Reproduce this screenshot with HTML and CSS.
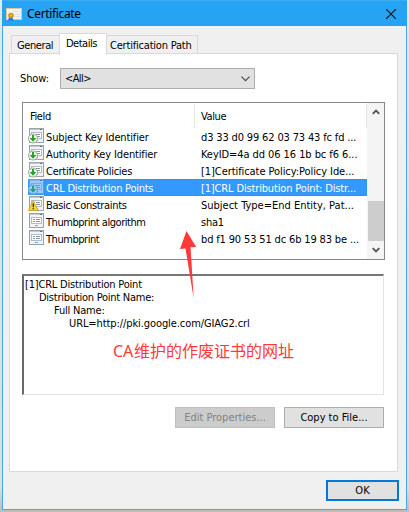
FILE: index.html
```html
<!DOCTYPE html>
<html lang="en">
<head>
<meta charset="utf-8">
<title>Certificate</title>
<link rel="stylesheet" href="styles.css">
</head>
<body>
<svg class="defs" aria-hidden="true">
  <symbol id="doc" viewBox="0 0 16 16">
    <rect x="1.5" y=".5" width="14" height="14" fill="#f1f3f5" stroke="#9aa2a9"/>
    <path d="M2 1.5h13" stroke="#c3cbd2"/>
    <path d="M12 1.5h2" stroke="#627583"/>
    <rect x="3.5" y="4.5" width="10" height="6" fill="#fff" stroke="#b4bdc4"/>
    <path d="M5 6.5h2M8 6.5h4M5 8.5h2M8 8.5h4" stroke="#89959f"/>
    <path d="M7 12.5h3" stroke="#36c5ee"/>
  </symbol>
  <symbol id="ext" viewBox="0 0 16 16">
    <use href="#doc"/>
    <circle cx="5" cy="10.5" r="4.5" fill="#f6faf5" stroke="#8c9b8d" stroke-width=".9"/>
    <path d="M4 7h2v3h2.5L5 13.8 1.5 10H4z" fill="#26a423"/>
  </symbol>
  <symbol id="warn" viewBox="0 0 16 16">
    <use href="#doc"/>
    <path d="M5.2 4.5 10.2 14.5H.4z" fill="#ffd82d" stroke="#c69b16" stroke-width=".8" stroke-linejoin="round"/>
    <path d="M5.3 7.5v3.7M5.3 12v1.3" stroke="#33301e" stroke-width="1.3"/>
  </symbol>
</svg>
<div class="window">
  <header class="titlebar">
    <svg class="cert" viewBox="0 0 16 14"><rect x=".5" y=".5" width="15" height="11" fill="#f4f2ed" stroke="#d9c8a5"/><path d="M7 3.5h6M9 6.5h5M9 8.5h5" stroke="#dcdedf"/><path d="m3 9-1 4 2-1 1 1V9zm3 0 2 4-2-1-1 1V9z" fill="#2873d0"/><circle cx="5" cy="7.5" r="2.8" fill="#d79313"/><circle cx="5" cy="7.2" r="1.2" fill="#f0b437"/></svg>
    <span class="title">Certificate</span>
    <svg class="close" viewBox="0 0 10 10"><path d="m0 0 10 10M10 0 0 10" stroke="#111" stroke-width="1.1"/></svg>
  </header>
  <nav class="tabs">
    <div class="tab general">General</div>
    <div class="tab active">Details</div>
    <div class="tab path">Certification Path</div>
  </nav>
  <main class="panel">
    <div class="show">
      <label>Show:</label>
      <div class="select"><span>&lt;All&gt;</span><svg viewBox="0 0 9 6"><path d="m.5.7 4 4 4-4" fill="none" stroke="#444" stroke-width="1.1"/></svg></div>
    </div>
    <section class="list">
      <div class="table">
        <div class="head"><span class="field">Field</span><span class="value">Value</span></div>
        <div class="row"><svg><use href="#ext"/></svg><span class="name n1">Subject Key Identifier</span><span class="data d1">d3 33 d0 99 62 03 73 43 fc fd ...</span></div>
        <div class="row"><svg><use href="#ext"/></svg><span class="name n2">Authority Key Identifier</span><span class="data d2">KeyID=4a dd 06 16 1b bc f6 6...</span></div>
        <div class="row"><svg><use href="#ext"/></svg><span class="name n3">Certificate Policies</span><span class="data d3">[1]Certificate Policy:Policy Ide...</span></div>
        <div class="row selected"><svg><use href="#ext"/></svg><span class="name n4">CRL Distribution Points</span><span class="data d4">[1]CRL Distribution Point: Distr...</span></div>
        <div class="row"><svg><use href="#warn"/></svg><span class="name n5">Basic Constraints</span><span class="data d5">Subject Type=End Entity, Pat...</span></div>
        <div class="row"><svg><use href="#doc"/></svg><span class="name n6">Thumbprint algorithm</span><span class="data d6">sha1</span></div>
        <div class="row"><svg><use href="#doc"/></svg><span class="name n7">Thumbprint</span><span class="data d7">bd f1 90 53 51 dc 6b 19 83 be ...</span></div>
      </div>
      <div class="scrollbar">
        <svg viewBox="0 0 8 6"><path d="m.7 4.8 3.3-3.3 3.3 3.3" fill="none" stroke="#555" stroke-width="1.9"/></svg>
        <div class="thumb"></div>
        <svg viewBox="0 0 8 6"><path d="m.7 1.2 3.3 3.3 3.3-3.3" fill="none" stroke="#555" stroke-width="1.9"/></svg>
      </div>
    </section>
    <section class="details">
      <p class="l1">[1]CRL Distribution Point</p>
      <p class="l2">Distribution Point Name:</p>
      <p class="l3">Full Name:</p>
      <p class="l4">URL=http://pki.google.com/GIAG2.crl</p>
      <p class="note"><span>CA</span>维护的作废证书的网址</p>
    </section>
    <div class="actions"><button class="edit" disabled>Edit Properties...</button><button class="copy">Copy to File...</button></div>
  </main>
  <footer><button class="ok">OK</button></footer>
</div>
<svg class="arrow" viewBox="0 0 18 68"><path d="m6.5 0 9.7 16-5.7.3L13.7 67.5 5.5 17.5 0 18z" fill="#ff3838"/></svg>
</body>
</html>
```
FILE: styles.css
```css
* { box-sizing: border-box; }
body {
  margin: 0; height: 512px; padding: 0 2px; overflow: hidden;
  background: linear-gradient(#e4e8e8, #dedede 95%, #bcbcbc);
  font: 11px/13px "DejaVu Sans Condensed", "DejaVu Sans", sans-serif;
  font-stretch: condensed;
  color: #000;
}
.defs { position: absolute; width: 0; height: 0; }
svg { display: block; flex: none; }
.window { width: 405px; height: 510px; background: #f0f0f0; border: 1px solid #3ea9ee; border-top: 0; white-space: nowrap; }
.titlebar { height: 26px; margin: 0 -1px; padding: 0 11px 0 4px; display: flex; align-items: center; background: #27a3f3; border-top: 1px solid #40aaf0; }
.cert { width: 16px; height: 14px; margin-top: 2px; }
.title { font: 12px/16px "Noto Sans", sans-serif; margin-left: 5px; letter-spacing: -.35px; }
.close { width: 10px; height: 10px; margin-left: auto; }
.tabs { height: 28px; padding: 7px 0 0 8px; display: flex; align-items: flex-end; }
.tab { height: 19px; border: 1px solid #d9d9d9; border-bottom: 0; padding-top: 3px; }
.general { width: 48px; padding-left: 5px; border-right: 0; letter-spacing: -.4px; }
.active { width: 48px; height: 22px; margin-bottom: -1px; padding: 3px 0 0 6px; background: #fff; position: relative; letter-spacing: -.5px; }
.path { width: 91px; padding-left: 3px; border-left: 0; letter-spacing: -.2px; }
.panel { width: 389px; height: 419px; margin-left: 6px; margin-top: -1px; padding: 14px 12px 0; background: #fff; border: 1px solid #d9d9d9; }
.show { display: flex; align-items: center; height: 21px; }
.show label { width: 38px; margin-left: -2px; letter-spacing: -.1px; }
.select { width: 195px; height: 21px; margin-left: 2px; padding: 0 4px; display: flex; align-items: center; justify-content: space-between; background: #e1e1e1; border: 1px solid #adadad; letter-spacing: -.6px; }
.select svg { width: 9px; height: 6px; }
.list { width: 363px; height: 158px; margin-top: 13px; border: 1px solid #828790; display: flex; }
.table { width: 344px; padding: 1px 0 0; }
.head { height: 24px; display: flex; line-height: 26px; letter-spacing: -.4px; }
.field { width: 172px; padding-left: 7px; border-right: 1px solid #e5e5e5; }
.value { width: 172px; padding-left: 6px; border-right: 1px solid #e5e5e5; }
.row { height: 17px; padding-left: 5px; display: flex; line-height: 17px; }
.row svg { width: 16px; height: 16px; }
.name { width: 150px; padding: 1px 0 0 2px; }
.data { width: 173px; padding: 1px 0 0 7px; }
.selected .name, .selected .data { background: #3399ff; color: #fff; border: 1px dotted #cc6600; line-height: 15px; }
.selected .name { border-right: 0; padding-left: 1px; }
.selected .data { border-left: 0; }
.selected svg { background: #3399ff; }
.selected use { opacity: .55; }
.n1, .n2 { letter-spacing: -.14px; }
.n3, .n4 { letter-spacing: -.25px; }
.n5 { letter-spacing: -.3px; }
.n6, .n7 { letter-spacing: -.46px; }
.d1, .d4, .d7 { letter-spacing: -.15px; }
.d2, .d3 { letter-spacing: -.07px; }
.d6 { letter-spacing: -.25px; }
.scrollbar { width: 17px; padding: 6px 0 6px; background: #f4f4f4; display: flex; flex-direction: column; align-items: center; }
.scrollbar svg { width: 8px; height: 6px; }
.thumb { width: 16px; height: 40px; margin-top: auto; margin-bottom: 6px; background: #cdcdcd; }
.details { width: 362px; height: 121px; margin-top: 14px; padding: 2px 1px; border: 2px solid #696969; border-top-color: #777; border-right: 1px solid #e3e3e3; border-bottom: 1px solid #e3e3e3; }
.details p { margin: 0; }
.l1 { letter-spacing: -.2px; }
.details .l2 { padding-left: 14px; letter-spacing: -.25px; }
.details .l3 { padding-left: 29px; letter-spacing: -.2px; }
.details .l4 { padding-left: 44px; letter-spacing: -.09px; }
.details .note { margin: 11px 0 0 88px; font: 400 16px/18px "Noto Sans CJK SC", sans-serif; color: #ff3838; }
.note span { display: inline-block; width: 21px; font-family: "Noto Sans", sans-serif; }
.actions { display: flex; justify-content: flex-end; gap: 9px; margin: 12px 1px 0 0; }
button { font: inherit; color: #000; background: #e1e1e1; border: 1px solid #adadad; height: 21px; width: 100px; padding: 0; }
.edit { background: #ccc; border-color: #bfbfbf; color: #838383; }
footer { display: flex; justify-content: flex-end; padding: 8px 7px 0 0; }
.ok { width: 73px; border: 2px solid #0078d7; }
.arrow { position: absolute; left: 180px; top: 231px; width: 18px; height: 68px; }
```
